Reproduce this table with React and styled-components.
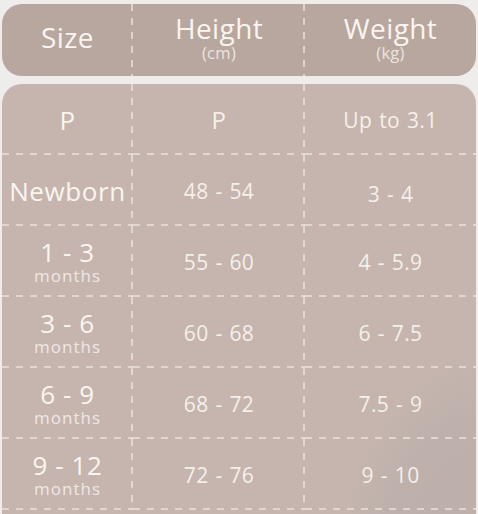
import React from "react";
import styled, { createGlobalStyle } from "styled-components";

const rows = [
  { size: "P", height: "P", heightSize: 24, weight: "Up to 3.1", weightSize: 21 },
  { size: "Newborn", height: "48 - 54", weight: "3 - 4", shift: 6 },
  { size: "1 - 3", sub: "months", height: "55 - 60", weight: "4 - 5.9" },
  { size: "3 - 6", sub: "months", height: "60 - 68", weight: "6 - 7.5" },
  { size: "6 - 9", sub: "months", height: "68 - 72", weight: "7.5 - 9" },
  { size: "9 - 12", sub: "months", height: "72 - 76", weight: "9 - 10" },
];

const App = () => {
  return (
    <>
      <GlobalStyle />
      <PageS>
        <HeaderBarS>
          <HeadCellS $divider>
            <HeadTitleS>Size</HeadTitleS>
          </HeadCellS>
          <HeadCellS $divider>
            <HeadTitleS>Height</HeadTitleS>
            <UnitS>(cm)</UnitS>
          </HeadCellS>
          <HeadCellS>
            <HeadTitleS>Weight</HeadTitleS>
            <UnitS>(kg)</UnitS>
          </HeadCellS>
        </HeaderBarS>

        <TableS>
          {rows.map((row) => (
            <React.Fragment key={row.size}>
              <CellS $divider>
                <SizeS>{row.size}</SizeS>
                {row.sub && <MonthsS>{row.sub}</MonthsS>}
              </CellS>
              <CellS $divider>
                <ValueS $size={row.heightSize}>{row.height}</ValueS>
              </CellS>
              <CellS>
                <ValueS $size={row.weightSize} $shift={row.shift}>
                  {row.weight}
                </ValueS>
              </CellS>
            </React.Fragment>
          ))}
        </TableS>
      </PageS>
    </>
  );
};

export default App;

const dash = "rgba(236, 226, 219, 0.75)";

const GlobalStyle = createGlobalStyle`
  html, body {
    margin: 0;
    padding: 0;
    background: #eeedeb;
  }
  body {
    font-family: "Open Sans", "Noto Sans", sans-serif;
    color: #faf5f0;
    overflow: hidden;
  }
`;

const PageS = styled.div`
  width: 478px;
  height: 514px;
  padding: 4px 2px 0 2px;
  box-sizing: border-box;
  display: flex;
  flex-direction: column;
  gap: 8px;
  overflow: hidden;
`;

const HeaderBarS = styled.div`
  display: grid;
  grid-template-columns: 131px 172px 1fr;
  height: 72px;
  border-radius: 20px;
  background: #b8a79f;
  flex-shrink: 0;
`;

const dividerRight = `
  background-image: repeating-linear-gradient(
    to bottom,
    ${dash} 0 7px,
    transparent 7px 14px
  );
  background-size: 2px 100%;
  background-position: right top;
  background-repeat: no-repeat;
`;

const HeadCellS = styled.div`
  display: flex;
  flex-direction: column;
  align-items: center;
  justify-content: center;
  padding-bottom: 6px;
  box-sizing: border-box;
  ${(p) => (p.$divider ? dividerRight : "")}
`;

const HeadTitleS = styled.div`
  font-size: 28px;
  letter-spacing: 0.4px;
  line-height: 30px;
`;

const UnitS = styled.div`
  font-size: 16.5px;
  line-height: 18px;
  margin-top: 1px;
  letter-spacing: 0.3px;
  opacity: 0.8;
`;

const TableS = styled.div`
  flex: 1;
  display: grid;
  grid-template-columns: 131px 172px 1fr;
  grid-auto-rows: 71px;
  align-content: start;
  border-radius: 20px 20px 0 0;
  background-color: #c5b5ae;
  background-image: radial-gradient(
    ellipse 160px 250px at 490px 520px,
    rgba(176, 168, 166, 0.4) 0%,
    rgba(176, 168, 166, 0.35) 75%,
    rgba(176, 168, 166, 0) 100%
  );
  background-repeat: no-repeat;
`;

const CellS = styled.div`
  display: flex;
  flex-direction: column;
  align-items: center;
  justify-content: center;
  background-image: repeating-linear-gradient(
      to right,
      ${dash} 0 7px,
      transparent 7px 14px
    )
    ${(p) =>
      p.$divider
        ? `, repeating-linear-gradient(to bottom, ${dash} 0 7px, transparent 7px 14px)`
        : ""};
  background-size: 100% 2px ${(p) => (p.$divider ? ", 2px 100%" : "")};
  background-position: left bottom ${(p) => (p.$divider ? ", right top" : "")};
  background-repeat: no-repeat;
`;

const SizeS = styled.div`
  font-size: 26px;
  line-height: 28px;
  letter-spacing: 0.6px;
`;

const MonthsS = styled.div`
  font-size: 17px;
  line-height: 18px;
  margin-top: 1px;
  letter-spacing: 1px;
  opacity: 0.8;
`;

const ValueS = styled.div`
  font-size: ${(p) => p.$size || 21}px;
  letter-spacing: 0.4px;
  word-spacing: 1px;
  opacity: 0.92;
  margin-top: ${(p) => p.$shift || 0}px;
`;
